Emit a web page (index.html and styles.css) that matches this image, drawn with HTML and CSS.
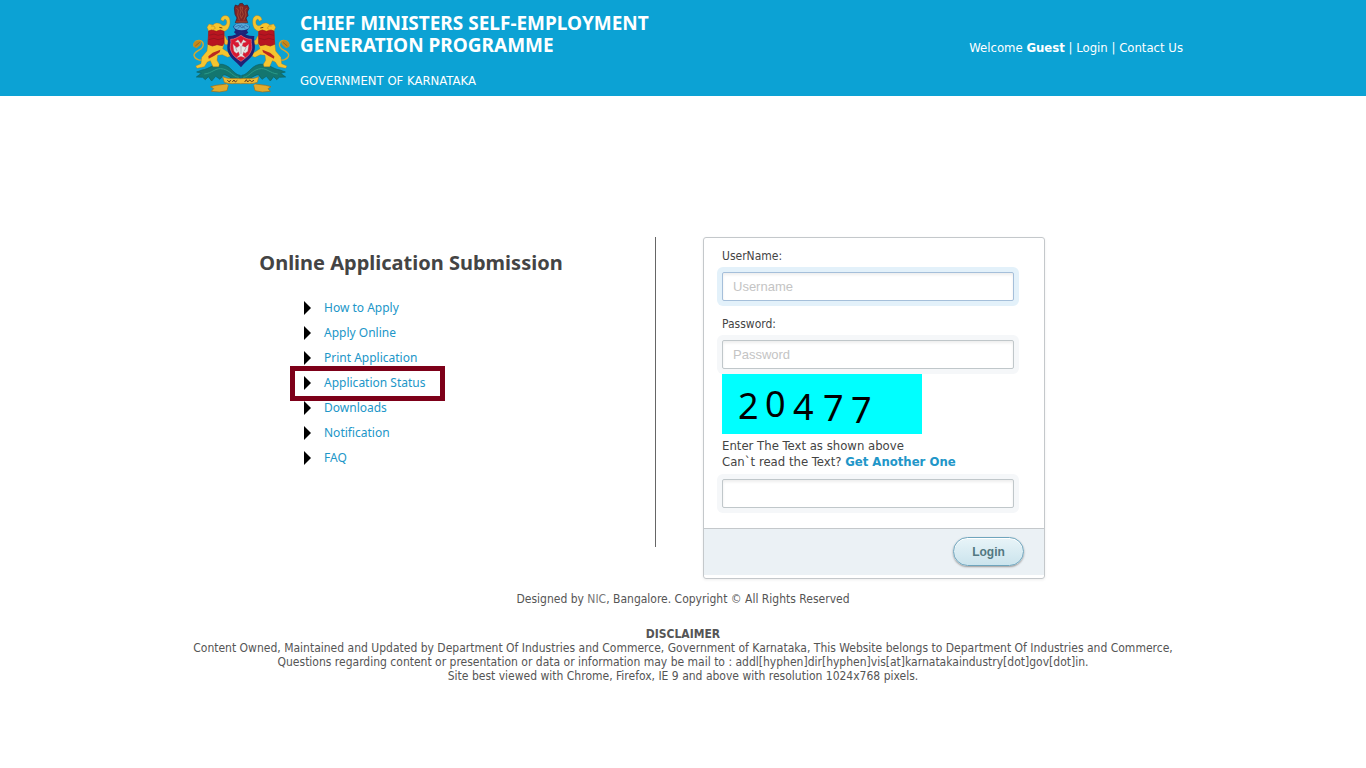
FILE: index.html
```html
<!DOCTYPE html>
<html lang="en">
<head>
    <meta charset="UTF-8">
    <meta name="viewport" content="width=device-width, initial-scale=1.0">
    <title>Chief Ministers Self-Employment Generation Programme</title>
    <link rel="stylesheet" href="styles.css">
</head>
<body>
    <header class="header">
        <div class="container header-inner">
            <svg class="emblem" viewBox="21 0 294 288" role="img" aria-label="Government of Karnataka emblem">
                <!-- foliage -->
                <g fill="#14766f" stroke="#0b5f63" stroke-width="2">
                    <path d="M166 226C145 224 140 198 112 193C84 190 74 207 51 210L35 216L49 220L34 231L53 232L61 239L70 230L80 243L92 229L105 238L116 224C131 225 145 244 166 242Z"/>
                    <path d="M170 226C191 224 196 198 224 193C252 190 262 207 285 210L301 216L287 220L302 231L283 232L275 239L266 230L256 243L244 229L231 238L220 224C205 225 191 244 170 242Z"/>
                    <path fill="none" stroke="#2a9b89" stroke-width="3" d="M58 222C82 220 92 201 115 207S142 229 161 232M278 222C254 220 244 201 221 207S194 229 175 232"/>
                </g>
                <!-- lion-elephants on both sides, mirrored -->
                <g id="beast">
                    <path d="M60 178C46 184 29 178 27 166C26 155 45 152 52 142C59 130 51 119 38 122C29 124 25 131 27 139" fill="none" stroke="#d9a82b" stroke-width="4"/>
                    <path d="M27 141C21 130 30 121 43 121C52 124 50 132 43 138L34 145Z" fill="#c48a1c"/>
                    <path d="M31 138L44 127" stroke="#8b501e" stroke-width="2"/>
                    <path d="M110 108L120 108L126 120L136 124L138 132L122 134L114 126Z" fill="#f0bd30" stroke="#a46d1b" stroke-width="1"/>
                    <path d="M72 96L66 82L72 72L84 75C92 66 104 68 111 76C121 80 127 73 125 63C122 55 117 57 115 64L107 59C110 44 129 42 134 56C138 75 130 91 117 94L118 130L113 146L134 160L136 169L128 172L112 164L98 166L96 181L103 193L101 200L84 200L76 182L67 186L58 200L36 205L32 198L48 191L50 172L66 153Z" fill="#f5c52f" stroke="#a46d1b" stroke-width="1"/>
                    <path d="M71 93L80 90L94 94L106 90L117 94L117 130L112 137L96 134L82 138L69 133Z" fill="#b81520" stroke="#94131e" stroke-width="2"/>
                    <path d="M72 106L87 102L99 106L116 102M71 119L87 115L99 119L116 115" fill="none" stroke="#8c121d" stroke-width="2"/>
                    <path d="M70 169L83 158L106 149L104 157L88 167L71 176Z" fill="#b92a20"/>
                    <path d="M103 82L112 84" stroke="#70410e" stroke-width="3"/>
                    <path d="M78 78L87 78L91 85L84 89" fill="none" stroke="#c88c1d" stroke-width="2"/>
                </g>
                <use href="#beast" transform="translate(338 0) scale(-1 1)"/>
                <!-- shield with the two-headed bird -->
                <path d="M128 108C144 109 154 103 168 95C182 104 192 109 208 108C205 126 214 137 207 156C201 175 181 184 168 202C153 184 135 174 129 156C123 138 132 126 128 108Z" fill="#202276"/>
                <path d="M137 118C149 118 157 112 168 106C179 114 187 118 199 118C197 132 204 141 198 153C193 168 179 175 168 184C155 175 143 168 138 153C132 140 140 132 137 118Z" fill="#d91830" stroke="#ed7382" stroke-width="2"/>
                <path d="M164 137L160 127L151 126L159 119L168 131L175 119L184 126L174 128L171 138L181 142L191 133L188 154L180 160L176 155L173 165L181 173L168 169L155 173L164 165L161 155L154 160L147 154L144 133L155 143Z" fill="#e6e6e3" stroke="#b5a8ae" stroke-width="1"/>
                <path d="M151 141L156 153M184 141L178 153M168 138L168 162" stroke="#99929c" stroke-width="2"/>
                <!-- lion capital -->
                <path d="M145 81C148 65 190 65 194 81L186 92L190 98L180 105L168 95L156 105L147 97L151 91Z" fill="#202276"/>
                <ellipse cx="170" cy="80" rx="23" ry="11" fill="#55a9da"/>
                <path d="M151 80L162 76L171 84L181 76L190 81M158 86L169 75L181 86" fill="none" stroke="#285f9c" stroke-width="2"/>
                <path d="M148 24L151 15L160 18L164 11L172 10L178 17L187 15L192 25L187 36L189 47L183 54L188 68L151 68L156 54L150 43Z" fill="#812525" stroke="#401629" stroke-width="2"/>
                <path d="M154 24L160 30L158 45L163 61M185 24L180 31L183 45L176 61M165 21L173 21L171 32L175 43L169 55L165 43L168 32ZM153 66L187 66" fill="none" stroke="#b55a38" stroke-width="2"/>
                <!-- motto ribbon -->
                <path d="M124 252L93 256L77 260L86 266L79 274L103 276L126 272L130 256M211 252L242 256L258 260L249 266L256 274L232 276L210 272L206 256" fill="#e2ab2d" stroke="#9c6c19" stroke-width="2"/>
                <path d="M113 230C132 239 145 234 167 236C190 234 203 239 221 230L217 247C199 254 186 249 167 251C147 249 136 254 118 247Z" fill="#f0bc35" stroke="#aa7519" stroke-width="2"/>
                <path d="M127 241L133 246L137 240M142 246L147 240L151 246L157 241M179 246L184 239L188 246L194 240L200 245L207 241" fill="none" stroke="#643c1c" stroke-width="3"/>
            </svg>
            <div class="branding">
                <h1>CHIEF MINISTERS SELF-EMPLOYMENT<br>GENERATION PROGRAMME</h1>
                <p>GOVERNMENT OF KARNATAKA</p>
            </div>
            <nav class="top-links">
                Welcome <strong>Guest</strong> | <a href="#login">Login</a> | <a href="#contact">Contact Us</a>
            </nav>
        </div>
    </header>

    <main class="container main">
        <section class="submission">
            <h2>Online Application Submission</h2>
            <ul class="menu">
                <li><a href="#how">How to Apply</a></li>
                <li><a href="#apply">Apply Online</a></li>
                <li><a href="#print">Print Application</a></li>
                <li class="highlighted"><a href="#status">Application Status</a></li>
                <li><a href="#downloads">Downloads</a></li>
                <li><a href="#notification">Notification</a></li>
                <li><a href="#faq">FAQ</a></li>
            </ul>
        </section>

        <form class="login" id="login">
            <div class="login-body">
                <label for="username">UserName:</label>
                <input type="text" id="username" placeholder="Username" autofocus>
                <label for="password">Password:</label>
                <input type="password" id="password" placeholder="Password">
                <svg class="captcha" width="200" height="60" role="img" aria-label="Captcha">
                    <text x="16 43 71 101 129" y="45 43 46 47 49">20477</text>
                </svg>
                <div class="captcha-help">
                    <label for="captcha">Enter The Text as shown above</label>
                    Can`t read the Text? <a href="#captcha">Get Another One</a>
                </div>
                <input type="text" id="captcha">
            </div>
            <div class="login-footer">
                <button type="submit">Login</button>
            </div>
        </form>
    </main>

    <footer class="footer">
        <p>Designed by <a href="#nic">NIC</a>, Bangalore. Copyright © All Rights Reserved</p>
        <div class="disclaimer">
            <strong>DISCLAIMER</strong><br>
            Content Owned, Maintained and Updated by Department Of Industries and Commerce, Government of Karnataka, This Website belongs to Department Of Industries and Commerce,<br>
            Questions regarding content or presentation or data or information may be mail to : addl[hyphen]dir[hyphen]vis[at]karnatakaindustry[dot]gov[dot]in.<br>
            Site best viewed with Chrome, Firefox, IE 9 and above with resolution 1024x768 pixels.
        </div>
    </footer>
</body>
</html>
```
FILE: styles.css
```css
*,
*::before,
*::after {
    box-sizing: border-box;
}
body {
    margin: 0;
    background: #fff;
    color: #444;
    font-family: Tahoma, "DejaVu Sans Condensed", sans-serif;
    font-size: 12px;
    line-height: 14px;
}
h1, h2, .menu, .captcha {
    font-family: Tahoma, "Noto Sans", sans-serif;
}
a {
    color: #2196c8;
    text-decoration: none;
}
a:hover {
    text-decoration: underline;
}
.container {
    max-width: 1000px;
    margin: 0 auto;
}

/* header */
.header {
    background: #0ca2d4;
    color: #fff;
    font-size: 13px;
}
.header-inner {
    display: flex;
    align-items: center;
    min-height: 96px;
    padding-left: 9px;
}
.emblem {
    width: 98px;
    height: 96px;
    flex-shrink: 0;
}
.branding {
    margin-left: 10px;
    padding-top: 4px;
}
.branding h1 {
    margin: 0 0 18px;
    font-size: 19px;
    line-height: 22px;
}
.branding p {
    margin: 0;
}
.top-links {
    margin-left: auto;
}
.top-links a {
    color: #fff;
}

/* menu and login form */
.main {
    display: flex;
    align-items: flex-start;
    padding-top: 141px;
}
.submission {
    flex: 0 1 473px;
    min-height: 310px;
    padding: 14px 16px 0 0;
    border-right: 1px solid #666;
}
.submission h2 {
    margin: 0;
    font-size: 20px;
    line-height: 24px;
    text-align: center;
}
.menu {
    margin: 20px 0 0;
    padding: 0 0 0 121px;
    list-style: none;
}
.menu li {
    position: relative;
    display: flex;
    align-items: center;
    gap: 13px;
    height: 25px;
}
.menu li::before {
    content: "";
    border: solid transparent;
    border-width: 7px 0 7px 7px;
    border-left-color: #000;
}
.menu .highlighted::after {
    content: "";
    position: absolute;
    top: -4px;
    left: -14px;
    width: 155px;
    height: 35px;
    border: 5px solid #7d0019;
    pointer-events: none;
}
.login {
    width: 342px;
    margin-left: 47px;
    padding-bottom: 3px;
    border: 1px solid #c4c8cb;
    border-radius: 3px;
    box-shadow: 0 1px 3px #eee;
}
.login-body {
    padding: 11px 18px 20px;
}
.login label {
    display: block;
}
.login input {
    display: block;
    width: 292px;
    height: 29px;
    margin: 9px 0 16px;
    padding: 0 10px;
    border: 1px solid #c0c7ca;
    border-radius: 2px;
    outline: none;
    background: #fff;
    box-shadow: inset 0 2px 3px #eee, 0 0 0 5px #f5f7f9;
    font: 13px "Liberation Sans", Arial, sans-serif;
}
.login input:focus {
    border-color: #a5bfda;
    box-shadow: inset 0 2px 3px #eee, 0 0 0 5px #e3f1fa;
}
.login input::placeholder {
    color: #c4c4c4;
}
.login #password {
    margin-bottom: 5px;
}
.login #captcha {
    margin-bottom: 0;
}
.captcha {
    position: relative;
    display: block;
    background: #0ff;
    font-size: 36px;
}
.captcha-help {
    padding-top: 4px;
    font-size: 13px;
    line-height: 16px;
}
.captcha-help a {
    font-weight: bold;
}
.login-footer {
    display: flex;
    justify-content: flex-end;
    padding: 8px 20px 9px;
    border-top: 1px solid #c4c8cb;
    background: #ebf1f5;
}
.login button {
    width: 71px;
    height: 29px;
    padding: 0;
    border: 1px solid #6fa5bd;
    border-radius: 15px;
    background: linear-gradient(#e8f4f8, #cbe4ed);
    box-shadow: 0 1px 2px #999, inset 0 1px 0 #fff;
    color: #527881;
    font: bold 12px "Liberation Sans", Arial, sans-serif;
    cursor: pointer;
}

/* footer */
.footer {
    padding: 13px 20px;
    color: #555;
    text-align: center;
}
.footer p {
    margin: 0 0 21px;
}
.footer p a {
    color: #777;
}
```
